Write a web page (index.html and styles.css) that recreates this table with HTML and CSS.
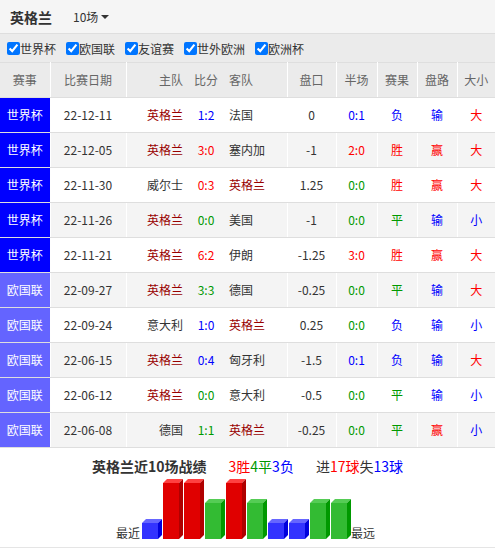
FILE: index.html
```html
<!DOCTYPE html>
<html lang="zh">
<head>
<meta charset="utf-8">
<title>英格兰 近10场</title>
<link rel="stylesheet" href="styles.css">
</head>
<body>
<div class="topbar">
  <span class="team-title">英格兰</span>
  <span class="count">10场<i class="caret"></i></span>
</div>
<div class="filters">
  <label class="filter"><input type="checkbox" checked>世界杯</label>
  <label class="filter"><input type="checkbox" checked>欧国联</label>
  <label class="filter"><input type="checkbox" checked>友谊赛</label>
  <label class="filter"><input type="checkbox" checked>世外欧洲</label>
  <label class="filter"><input type="checkbox" checked>欧洲杯</label>
</div>
<table class="games">
  <colgroup>
    <col class="c-lg"><col class="c-date"><col class="c-home"><col class="c-score"><col class="c-away"><col class="c-hcp"><col class="c-half"><col class="c-res"><col class="c-pl"><col class="c-ou">
  </colgroup>
  <thead>
    <tr>
      <th>赛事</th><th>比赛日期</th><th class="home">主队</th><th class="score nb">比分</th><th class="away nb">客队</th><th>盘口</th><th>半场</th><th>赛果</th><th>盘路</th><th>大小</th>
    </tr>
  </thead>
  <tbody>
    <tr>
      <td class="lg wc">世界杯</td><td>22-12-11</td><td class="home eng">英格兰</td><td class="score nb lose">1:2</td><td class="away nb">法国</td><td>0</td><td class="lose">0:1</td><td class="lose">负</td><td class="lose">输</td><td class="win">大</td>
    </tr>
    <tr>
      <td class="lg wc">世界杯</td><td>22-12-05</td><td class="home eng">英格兰</td><td class="score nb win">3:0</td><td class="away nb">塞内加</td><td>-1</td><td class="win">2:0</td><td class="win">胜</td><td class="win">赢</td><td class="win">大</td>
    </tr>
    <tr>
      <td class="lg wc">世界杯</td><td>22-11-30</td><td class="home">威尔士</td><td class="score nb win">0:3</td><td class="away nb eng">英格兰</td><td>1.25</td><td class="draw">0:0</td><td class="win">胜</td><td class="win">赢</td><td class="win">大</td>
    </tr>
    <tr>
      <td class="lg wc">世界杯</td><td>22-11-26</td><td class="home eng">英格兰</td><td class="score nb draw">0:0</td><td class="away nb">美国</td><td>-1</td><td class="draw">0:0</td><td class="draw">平</td><td class="lose">输</td><td class="lose">小</td>
    </tr>
    <tr>
      <td class="lg wc">世界杯</td><td>22-11-21</td><td class="home eng">英格兰</td><td class="score nb win">6:2</td><td class="away nb">伊朗</td><td>-1.25</td><td class="win">3:0</td><td class="win">胜</td><td class="win">赢</td><td class="win">大</td>
    </tr>
    <tr>
      <td class="lg nl">欧国联</td><td>22-09-27</td><td class="home eng">英格兰</td><td class="score nb draw">3:3</td><td class="away nb">德国</td><td>-0.25</td><td class="draw">0:0</td><td class="draw">平</td><td class="lose">输</td><td class="win">大</td>
    </tr>
    <tr>
      <td class="lg nl">欧国联</td><td>22-09-24</td><td class="home">意大利</td><td class="score nb lose">1:0</td><td class="away nb eng">英格兰</td><td>0.25</td><td class="draw">0:0</td><td class="lose">负</td><td class="lose">输</td><td class="lose">小</td>
    </tr>
    <tr>
      <td class="lg nl">欧国联</td><td>22-06-15</td><td class="home eng">英格兰</td><td class="score nb lose">0:4</td><td class="away nb">匈牙利</td><td>-1.5</td><td class="lose">0:1</td><td class="lose">负</td><td class="lose">输</td><td class="win">大</td>
    </tr>
    <tr>
      <td class="lg nl">欧国联</td><td>22-06-12</td><td class="home eng">英格兰</td><td class="score nb draw">0:0</td><td class="away nb">意大利</td><td>-0.5</td><td class="draw">0:0</td><td class="draw">平</td><td class="lose">输</td><td class="lose">小</td>
    </tr>
    <tr>
      <td class="lg nl">欧国联</td><td>22-06-08</td><td class="home">德国</td><td class="score nb draw">1:1</td><td class="away nb eng">英格兰</td><td>-0.25</td><td class="draw">0:0</td><td class="draw">平</td><td class="win">赢</td><td class="lose">小</td>
    </tr>
  </tbody>
</table>
<div class="summary">
  <b class="sum-title">英格兰近10场战绩</b><span class="sum-part"><span class="win">3胜</span><span class="draw">4平</span><span class="lose">3负</span></span><span class="sum-part">进<span class="win">17球</span>失<span class="lose">13球</span></span>
</div>
<div class="chart">
  <span class="chart-label">最近</span>
  <svg class="bar" width="21" height="20" viewBox="0 0 21 20"><polygon class="b-top" points="0,4 4,0 20,0 16,4"/><polygon class="b-side" points="16,4 20,0 20,16 16,20"/><rect class="b-front" x="0" y="4" width="16" height="16"/></svg>
  <svg class="bar red" width="21" height="60" viewBox="0 0 21 60"><polygon class="b-top" points="0,4 4,0 20,0 16,4"/><polygon class="b-side" points="16,4 20,0 20,56 16,60"/><rect class="b-front" x="0" y="4" width="16" height="56"/></svg>
  <svg class="bar red" width="21" height="60" viewBox="0 0 21 60"><polygon class="b-top" points="0,4 4,0 20,0 16,4"/><polygon class="b-side" points="16,4 20,0 20,56 16,60"/><rect class="b-front" x="0" y="4" width="16" height="56"/></svg>
  <svg class="bar green" width="21" height="40" viewBox="0 0 21 40"><polygon class="b-top" points="0,4 4,0 20,0 16,4"/><polygon class="b-side" points="16,4 20,0 20,36 16,40"/><rect class="b-front" x="0" y="4" width="16" height="36"/></svg>
  <svg class="bar red" width="21" height="60" viewBox="0 0 21 60"><polygon class="b-top" points="0,4 4,0 20,0 16,4"/><polygon class="b-side" points="16,4 20,0 20,56 16,60"/><rect class="b-front" x="0" y="4" width="16" height="56"/></svg>
  <svg class="bar green" width="21" height="40" viewBox="0 0 21 40"><polygon class="b-top" points="0,4 4,0 20,0 16,4"/><polygon class="b-side" points="16,4 20,0 20,36 16,40"/><rect class="b-front" x="0" y="4" width="16" height="36"/></svg>
  <svg class="bar" width="21" height="20" viewBox="0 0 21 20"><polygon class="b-top" points="0,4 4,0 20,0 16,4"/><polygon class="b-side" points="16,4 20,0 20,16 16,20"/><rect class="b-front" x="0" y="4" width="16" height="16"/></svg>
  <svg class="bar" width="21" height="20" viewBox="0 0 21 20"><polygon class="b-top" points="0,4 4,0 20,0 16,4"/><polygon class="b-side" points="16,4 20,0 20,16 16,20"/><rect class="b-front" x="0" y="4" width="16" height="16"/></svg>
  <svg class="bar green" width="21" height="40" viewBox="0 0 21 40"><polygon class="b-top" points="0,4 4,0 20,0 16,4"/><polygon class="b-side" points="16,4 20,0 20,36 16,40"/><rect class="b-front" x="0" y="4" width="16" height="36"/></svg>
  <svg class="bar green" width="21" height="40" viewBox="0 0 21 40"><polygon class="b-top" points="0,4 4,0 20,0 16,4"/><polygon class="b-side" points="16,4 20,0 20,36 16,40"/><rect class="b-front" x="0" y="4" width="16" height="36"/></svg>
  <span class="chart-label far">最远</span>
</div>
<div class="footer-line"></div>
</body>
</html>
```
FILE: styles.css
```css
html, body {
  margin: 0;
  padding: 0;
  background: #fff;
}
body {
  font-family: "Noto Sans CJK SC", "Noto Sans", sans-serif;
  font-size: 12px;
  color: #333;
  width: 495px;
}
.topbar {
  height: 33px;
  background: #f5f5f5;
  border-bottom: 1px solid #dedede;
  display: flex;
  align-items: center;
  padding-left: 10px;
}
.team-title {
  font-size: 14px;
  font-weight: bold;
  color: #333;
}
.count {
  margin-left: 21px;
  font-size: 12px;
  color: #333;
  display: inline-flex;
  align-items: center;
}
.caret {
  display: inline-block;
  margin-left: 3px;
  width: 0;
  height: 0;
  border-left: 4px solid transparent;
  border-right: 4px solid transparent;
  border-top: 4px solid #333;
}
.filters {
  height: 28px;
  background: #ebebeb;
  display: flex;
  align-items: center;
  gap: 10px;
  padding-left: 7px;
}
.filter {
  display: flex;
  align-items: center;
  font-size: 12px;
  color: #333;
}
.filter input {
  margin: 0;
  width: 13px;
  height: 13px;
}
.games {
  width: 495px;
  table-layout: fixed;
  border-collapse: collapse;
  border-top: 1px solid #dedede;
}
.c-lg { width: 50px; }
.c-date { width: 76px; }
.c-home { width: 64px; }
.c-score { width: 32px; }
.c-away { width: 65px; }
.c-hcp { width: 49px; }
.c-half { width: 41px; }
.c-res { width: 40px; }
.c-pl { width: 40px; }
.c-ou { width: 38px; }
.games th, .games td {
  height: 34px;
  padding: 0;
  text-align: center;
  white-space: nowrap;
  overflow: hidden;
  border-left: 1px solid #fff;
  border-bottom: 1px solid #dedede;
  font-size: 12px;
  line-height: 16px;
}
.games th:first-child, .games td:first-child {
  border-left: none;
}
.games th {
  background: #ebebeb;
  color: #666;
  font-weight: normal;
}
.games tbody tr:nth-child(even) td {
  background: #f4f4f4;
}
.games .nb {
  border-left: none;
}
.games .home {
  text-align: right;
  padding-right: 7px;
}
.games .away {
  text-align: left;
  padding-left: 7px;
}
.games td.lg {
  color: #fff;
}
.games td.wc, .games tbody tr:nth-child(even) td.wc {
  background: #0000ff;
}
.games td.nl, .games tbody tr:nth-child(even) td.nl {
  background: #6464ff;
}
.eng { color: #990000; }
.win { color: #f00; }
.lose { color: #0000ff; }
.draw { color: #009900; }
.summary {
  padding-top: 10px;
  height: 16px;
  line-height: 16px;
  text-align: center;
  font-size: 14px;
  color: #333;
}
.sum-title {
  font-weight: bold;
}
.sum-part {
  margin-left: 22px;
}
.chart {
  height: 65px;
  display: flex;
  justify-content: center;
  align-items: flex-end;
  padding-right: 4px;
}
.chart-label {
  font-size: 12px;
  line-height: 13px;
  color: #333;
  margin-right: 2px;
}
.chart-label.far {
  margin-right: 0;
  margin-left: -1px;
}
.bar {
  display: block;
}
.bar .b-front { fill: #3333ff; }
.bar .b-top { fill: #6666ff; }
.bar .b-side { fill: #0000dd; }
.bar.red .b-front { fill: #e00000; }
.bar.red .b-top { fill: #ff4040; }
.bar.red .b-side { fill: #b00000; }
.bar.green .b-front { fill: #33bb33; }
.bar.green .b-top { fill: #55cc55; }
.bar.green .b-side { fill: #009900; }
.footer-line {
  margin-top: 8px;
  height: 2px;
  background: #e5e5e5;
}
```
